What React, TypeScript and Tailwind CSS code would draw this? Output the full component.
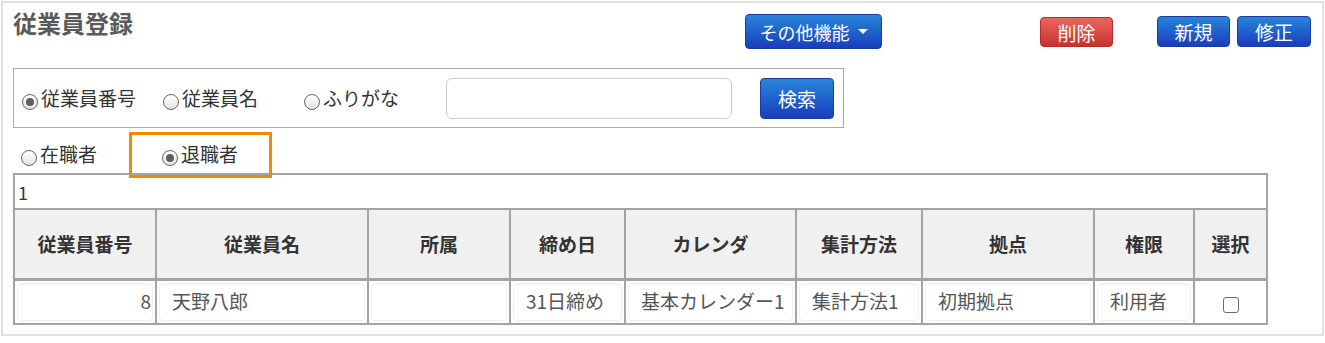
import React from "react";

const font = { fontFamily: '"Noto Sans CJK JP", "Noto Sans", sans-serif' };

function Radio({ checked, label, width }: { checked?: boolean; label: string; width: string }) {
  return (
    <label className={`flex items-center ${width}`}>
      <span className="mt-[8px] mr-[3px] flex h-[16px] w-[16px] shrink-0 items-center justify-center rounded-full border border-[#666] bg-linear-to-b from-[#ffffff] to-[#e4e4e4]">
        {checked && <span className="h-[8px] w-[8px] rounded-full bg-[#5f5f5f]" />}
      </span>
      <span className="text-[19px] leading-[24px] text-[#333]">{label}</span>
    </label>
  );
}

function BlueButton({ children, className }: { children: React.ReactNode; className: string }) {
  return (
    <button
      className={`flex items-center justify-center rounded-[4px] border border-[#1b3c9e] bg-linear-to-b from-[#2a84da] to-[#1c3cbc] text-white text-[18px] leading-none ${className}`}
    >
      {children}
    </button>
  );
}

const headers = ["従業員番号", "従業員名", "所属", "締め日", "カレンダ", "集計方法", "拠点", "権限", "選択"];
const widths = ["w-[142px]", "w-[212px]", "w-[142px]", "w-[115px]", "w-[171px]", "w-[126px]", "w-[172px]", "w-[100px]", "w-[73px]"];

function Cell({ children, right }: { children?: React.ReactNode; right?: boolean }) {
  return (
    <td className="h-[44px] border-2 border-[#a4a4a4] p-[2px] align-middle">
      <div
        className={`flex h-[38px] items-center whitespace-nowrap rounded-[4px] border border-[#efefef] px-[12px] text-[19px] text-[#555] shadow-[inset_0_1px_1px_rgba(0,0,0,0.04)] ${
          right ? "justify-end pr-[1px]" : ""
        }`}
      >
        {children}
      </div>
    </td>
  );
}

export default function App() {
  return (
    <div className="relative h-[343px] w-[1325px] bg-white pl-[1px] pt-[1px]" style={font}>
      <div className="h-[335px] w-[1323px] border-2 border-[#e0e0e0]">
        {/* header bar */}
        <div className="flex h-[65px] items-start">
          <div className="ml-[10px] mt-[4px] w-[732px] text-[24px] font-bold leading-[32px] text-[#5a5a5a]">
            従業員登録
          </div>
          <BlueButton className="mt-[11px] h-[35px] w-[137px] gap-[8px]">
            その他機能
            <span className="h-0 w-0 border-x-[5px] border-t-[5px] border-x-transparent border-t-white" />
          </BlueButton>
          <button className="ml-[158px] mt-[14px] flex h-[30px] w-[73px] items-center justify-center rounded-[4px] border border-[#b22c28] bg-linear-to-b from-[#e96560] to-[#c9302c] text-[19px] leading-none text-white">
            削除
          </button>
          <BlueButton className="ml-[44px] mt-[13px] h-[31px] w-[73px] text-[19px]">新規</BlueButton>
          <BlueButton className="ml-[7px] mt-[13px] h-[31px] w-[74px] text-[19px]">修正</BlueButton>
        </div>

        {/* search box */}
        <div className="ml-[10px] flex h-[60px] w-[831px] items-center border border-[#a9a9a9] pl-[8px]">
          <Radio checked label="従業員番号" width="w-[141px]" />
          <Radio label="従業員名" width="w-[141px]" />
          <Radio label="ふりがな" width="w-[142px]" />
          <input className="h-[41px] w-[286px] rounded-[6px] border border-[#cccccc] outline-none" />
          <BlueButton className="ml-[28px] h-[41px] w-[74px] text-[19px]">検索</BlueButton>
        </div>

        {/* status radios */}
        <div className="flex h-[45px] items-center pl-[18px] pt-[6px]">
          <Radio label="在職者" width="w-[141px]" />
          <Radio checked label="退職者" width="w-[141px]" />
        </div>

        {/* result table */}
        <table className="ml-[10px] w-[1253px] table-fixed border-collapse">
          <colgroup>
            {widths.map((w, i) => (
              <col key={i} className={w} />
            ))}
          </colgroup>
          <tbody>
            <tr>
              <td colSpan={9} className="h-[35px] border-2 border-[#a4a4a4] pl-[3px] text-[18px] leading-none text-[#333]">
                1
              </td>
            </tr>
            <tr>
              {headers.map((h) => (
                <th
                  key={h}
                  className="h-[70px] border-2 border-b-[3px] border-[#a4a4a4] bg-[#f0f0f0] text-center text-[19px] font-bold text-[#333]"
                >
                  {h}
                </th>
              ))}
            </tr>
            <tr>
              <Cell right>8</Cell>
              <Cell>天野八郎</Cell>
              <Cell />
              <Cell>31日締め</Cell>
              <Cell>基本カレンダー1</Cell>
              <Cell>集計方法1</Cell>
              <Cell>初期拠点</Cell>
              <Cell>利用者</Cell>
              <td className="h-[44px] border-2 border-[#a4a4a4] align-middle">
                <div className="mx-auto mt-[6px] h-[16px] w-[16px] rounded-[3px] border border-[#6a6a6a] bg-white" />
              </td>
            </tr>
          </tbody>
        </table>
      </div>

      {/* highlight annotation */}
      <div className="absolute left-[129px] top-[132px] z-10 h-[46px] w-[143px] border-[3px] border-[#f08a00]" />
    </div>
  );
}
